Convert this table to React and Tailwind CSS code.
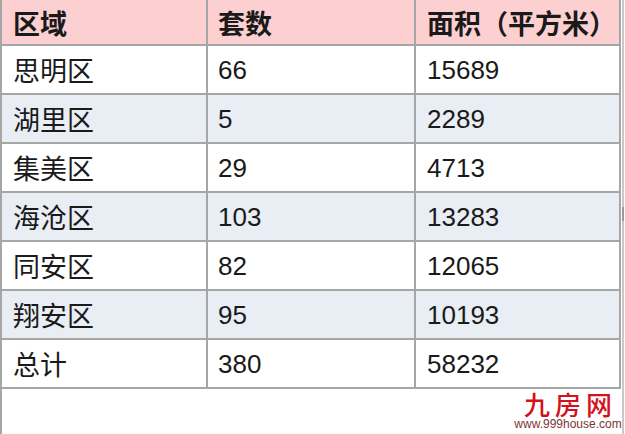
import React from 'react'

const rows = [
  { area: '思明区', count: '66', size: '15689' },
  { area: '湖里区', count: '5', size: '2289' },
  { area: '集美区', count: '29', size: '4713' },
  { area: '海沧区', count: '103', size: '13283' },
  { area: '同安区', count: '82', size: '12065' },
  { area: '翔安区', count: '95', size: '10193' },
  { area: '总计', count: '380', size: '58232' }
]

const cjk = { fontFamily: '"Noto Sans CJK SC", "Noto Sans", sans-serif' }
const num = { fontFamily: '"Liberation Sans", Arial, sans-serif' }

function Row({ cells, bg, header }) {
  const h = header ? 'h-[46px]' : 'h-[49px]'
  return (
    <div className={`flex ${h} ${bg} border-b-2 border-[#a6a6a6] text-[#1a1a1a]`}>
      <div className="w-[206px] pl-[11px] flex items-center border-r-2 border-[#a6a6a6]">{cells[0]}</div>
      <div className="w-[208px] pl-[10px] flex items-center border-r-2 border-[#a6a6a6]">{cells[1]}</div>
      <div className="w-[205px] pl-[11px] flex items-center border-r-2 border-[#a6a6a6]">{cells[2]}</div>
    </div>
  )
}

export default function App() {
  return (
    <div className="w-[625px] h-[434px] bg-white flex overflow-hidden">
      <div className="w-[621px] h-full border-l-2 border-[#a6a6a6] flex flex-col">
        <Row
          header
          bg="bg-[#fcd0d1]"
          cells={[
            <span style={cjk} className="text-[27px] font-bold leading-none">区域</span>,
            <span style={cjk} className="text-[27px] font-bold leading-none">套数</span>,
            <span style={cjk} className="text-[27px] font-bold leading-none whitespace-nowrap">面积（平方米）</span>
          ]}
        />
        {rows.map((r, i) => (
          <Row
            key={r.area}
            bg={i % 2 === 1 ? 'bg-[#e9edf4]' : 'bg-white'}
            cells={[
              <span style={cjk} className="text-[27px] leading-none">{r.area}</span>,
              <span style={num} className="text-[26px] leading-none">{r.count}</span>,
              <span style={num} className="text-[26px] leading-none">{r.size}</span>
            ]}
          />
        ))}
        <div className="flex-1 flex justify-end pr-[3px] pt-[1px]">
          <div className="flex flex-col items-center w-[100px]">
            <span style={cjk} className="block whitespace-nowrap text-[26px] leading-[28px] h-[28px] font-medium text-[#d3121d] tracking-[5px] pl-[5px]">九房网</span>
            <span style={num} className="block text-[12px] leading-[13px] text-[#7b3535] whitespace-nowrap">www.999house.com</span>
          </div>
        </div>
      </div>
      <div className="w-px" />
      <div className="w-[2px] flex flex-col">
        <div className="h-[207px] bg-[#c8c8c8]" />
        <div className="h-[14px] bg-[#9a9a9a]" />
        <div className="flex-1 bg-[#c8c8c8]" />
      </div>
    </div>
  )
}
